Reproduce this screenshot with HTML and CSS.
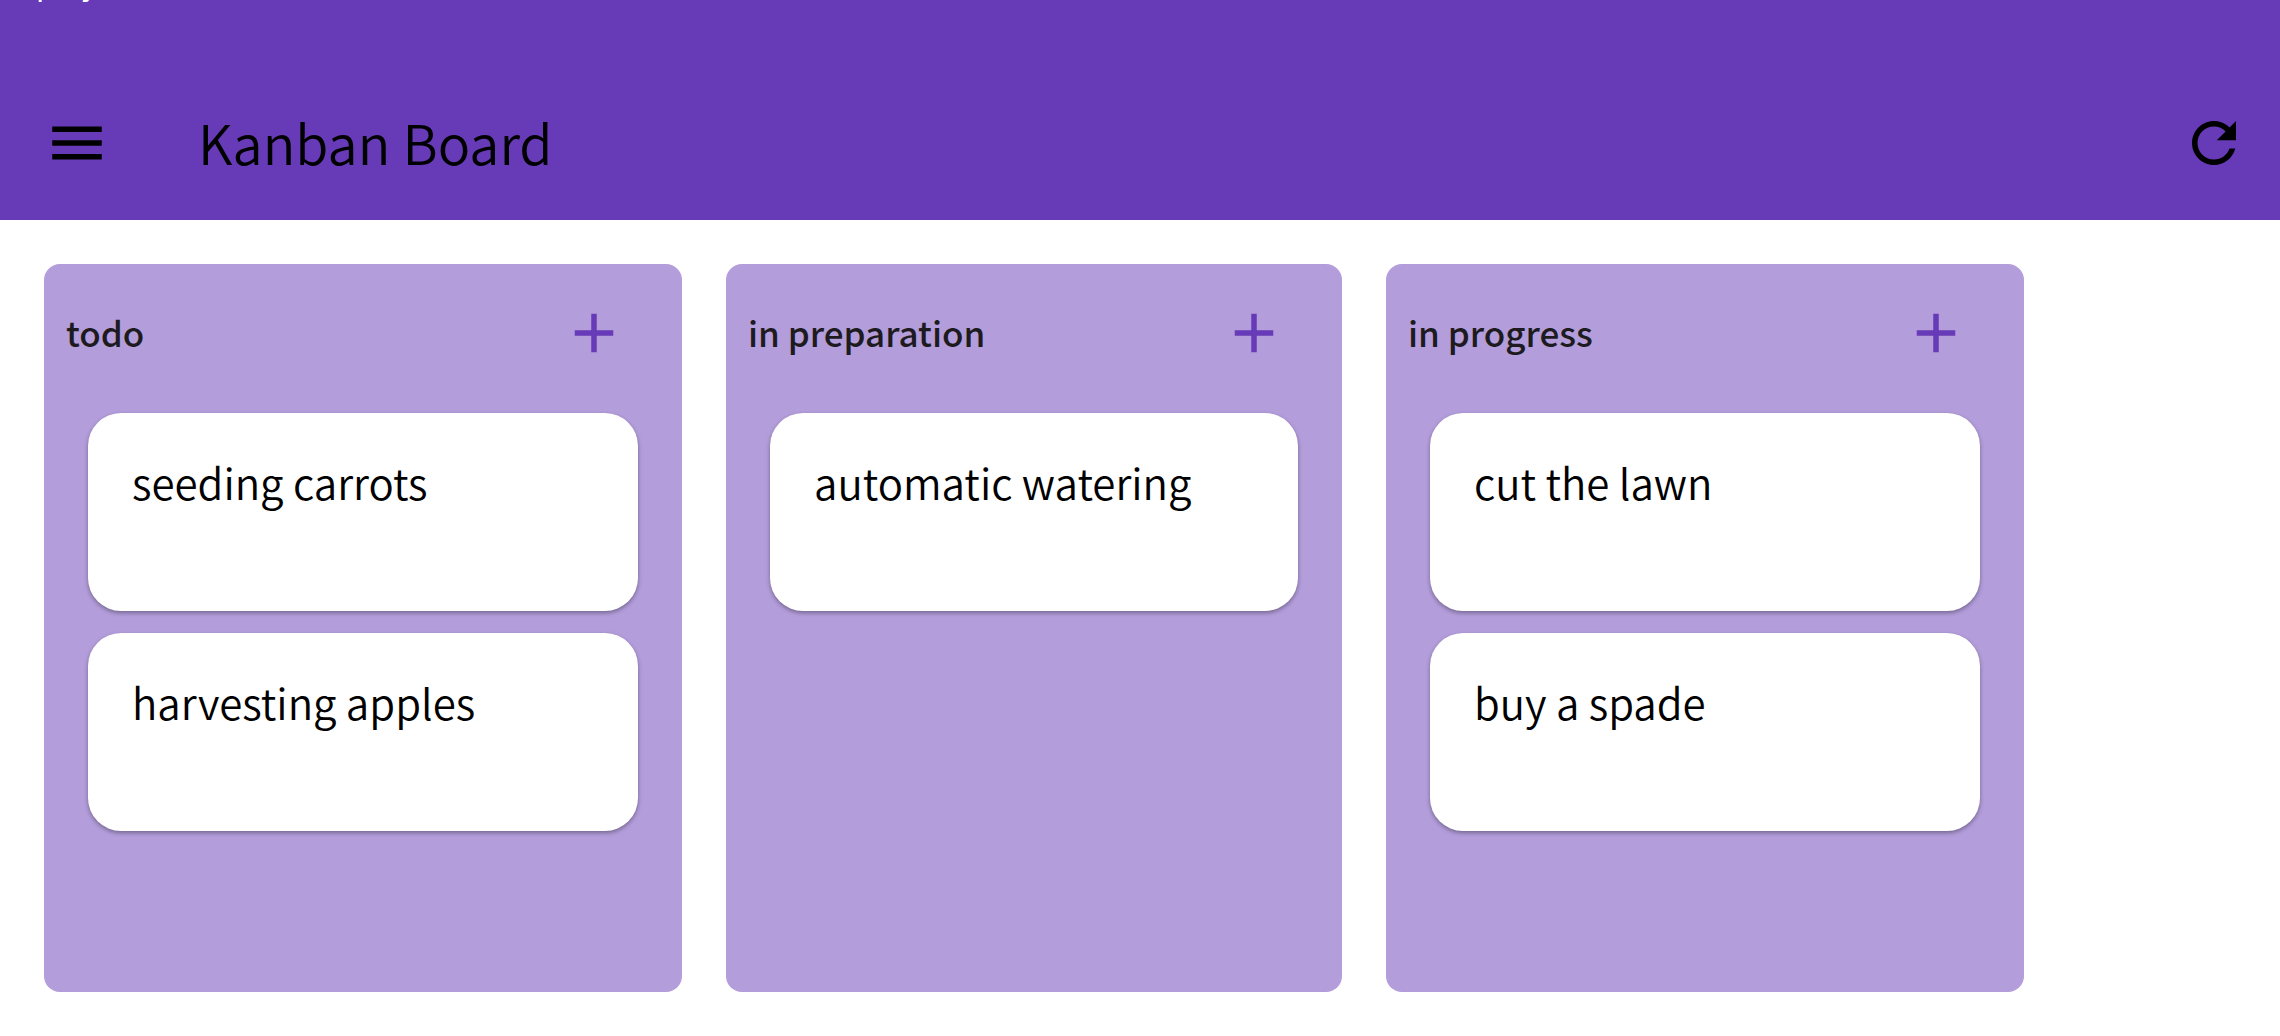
FILE: index.html
```html
<!DOCTYPE html>
<html lang="en">
<head>
<meta charset="utf-8">
<title>Kanban Board</title>
<link rel="stylesheet" href="styles.css">
</head>
<body>
<header class="app-bar">
  <div class="status-bar"><span class="status-text">project</span></div>
  <div class="toolbar">
    <button class="icon-button" type="button" aria-label="Open menu">
      <svg class="icon" viewBox="0 0 24 24" aria-hidden="true"><path d="M3 18h18v-2H3v2zm0-5h18v-2H3v2zm0-7v2h18V6H3z"/></svg>
    </button>
    <h1 class="app-title">Kanban Board</h1>
    <button class="icon-button" type="button" aria-label="Refresh">
      <svg class="icon" viewBox="0 0 24 24" aria-hidden="true"><path d="M17.65 6.35C16.2 4.9 14.21 4 12 4c-4.42 0-7.99 3.58-7.99 8s3.57 8 7.99 8c3.73 0 6.84-2.55 7.73-6h-2.08c-.82 2.33-3.04 4-5.65 4-3.31 0-6-2.69-6-6s2.69-6 6-6c1.66 0 3.14.69 4.22 1.78L13 11h7V4l-2.35 2.35z"/></svg>
    </button>
  </div>
</header>
<main class="board">
  <section class="column">
    <div class="column-header">
      <h2 class="column-title">todo</h2>
      <button class="icon-button icon-button-add" type="button" aria-label="Add to todo">
        <svg class="icon" viewBox="0 0 24 24" aria-hidden="true"><path d="M19 13h-6v6h-2v-6H5v-2h6V5h2v6h6v2z"/></svg>
      </button>
    </div>
    <ul class="cards">
      <li class="card">seeding carrots</li>
      <li class="card">harvesting apples</li>
    </ul>
  </section>
  <section class="column">
    <div class="column-header">
      <h2 class="column-title">in preparation</h2>
      <button class="icon-button icon-button-add" type="button" aria-label="Add to in preparation">
        <svg class="icon" viewBox="0 0 24 24" aria-hidden="true"><path d="M19 13h-6v6h-2v-6H5v-2h6V5h2v6h6v2z"/></svg>
      </button>
    </div>
    <ul class="cards">
      <li class="card">automatic watering</li>
    </ul>
  </section>
  <section class="column">
    <div class="column-header">
      <h2 class="column-title">in progress</h2>
      <button class="icon-button icon-button-add" type="button" aria-label="Add to in progress">
        <svg class="icon" viewBox="0 0 24 24" aria-hidden="true"><path d="M19 13h-6v6h-2v-6H5v-2h6V5h2v6h6v2z"/></svg>
      </button>
    </div>
    <ul class="cards">
      <li class="card">cut the lawn</li>
      <li class="card">buy a spade</li>
    </ul>
  </section>
</main>
</body>
</html>
```
FILE: styles.css
```css
* {
  box-sizing: border-box;
}

body {
  margin: 0;
  min-height: 100vh;
  display: flex;
  flex-direction: column;
  background: #fff;
  color: #000;
  font-family: "Noto Sans CJK SC", "Noto Sans", sans-serif;
  font-weight: 350;
}

h1,
h2,
ul {
  margin: 0;
  padding: 0;
}

.app-bar {
  background: #673ab7;
}

.status-bar {
  height: 66px;
  padding-left: 36px;
  overflow: hidden;
}

.status-text {
  display: block;
  margin-top: -35px;
  font-size: 30px;
  line-height: 34px;
  font-weight: 400;
  color: #fff;
}

.toolbar {
  display: flex;
  align-items: center;
  height: 154px;
  padding: 0 0 0 11px;
}

.icon-button {
  display: flex;
  align-items: center;
  justify-content: center;
  width: 132px;
  height: 132px;
  padding: 0;
  border: 0;
  border-radius: 50%;
  background: none;
  color: #000;
}

.icon-button-add {
  color: #673ab7;
}

.icon {
  width: 66px;
  height: 66px;
  fill: currentColor;
}

.app-title {
  flex: 1;
  padding: 0 0 4px 55px;
  font-size: 54px;
  line-height: 77px;
  font-weight: 350;
}

.board {
  flex: 1;
  display: grid;
  grid-template-columns: 29fr 28fr 29fr;
  gap: 44px;
  padding: 44px 256px 44px 44px;
}

.column {
  border-radius: 16px;
  background: #b39ddb;
}

.column-header {
  display: flex;
  align-items: center;
  justify-content: space-between;
  height: 138px;
  padding: 0 22px;
}

.column-title {
  padding-bottom: 4px;
  font-size: 35px;
  line-height: 55px;
  font-weight: 500;
  color: #1d1b20;
}

.cards {
  display: flex;
  flex-direction: column;
  gap: 22px;
  padding: 11px 44px 44px;
  list-style: none;
}

.card {
  min-height: 198px;
  padding: 44px;
  border-radius: 33px;
  background: #fff;
  box-shadow: 0 2px 4px rgba(0, 0, 0, 0.35);
  font-size: 42px;
  line-height: 49px;
}
```
